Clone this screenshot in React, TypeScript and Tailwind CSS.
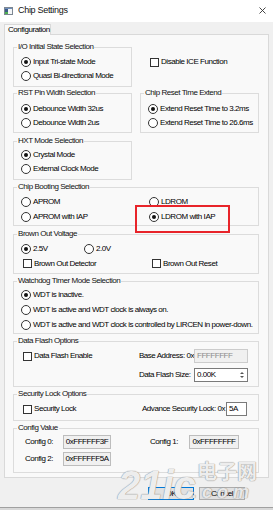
import React from 'react';

const PANEL_BG = 'bg-[#f9f9f9]';

interface ItemProps {
  label: string;
  checked?: boolean;
  className?: string;
}

const Radio: React.FC<ItemProps> = ({ label, checked, className = '' }) => (
  <div className={`flex items-center h-full ${className}`}>
    <span className="w-[10px] h-[10px] rounded-full border border-[#333] bg-white flex items-center justify-center shrink-0">
      {checked && <span className="w-[4px] h-[4px] rounded-full bg-[#111]" />}
    </span>
    <span className="ml-[2px] whitespace-nowrap">{label}</span>
  </div>
);

const Check: React.FC<ItemProps> = ({ label, checked, className = '' }) => (
  <div className={`flex items-center h-full ${className}`}>
    <span className="w-[9px] h-[9px] border border-[#333] bg-white shrink-0 flex items-center justify-center">
      {checked && <span className="w-[5px] h-[5px] bg-[#111]" />}
    </span>
    <span className="ml-[2px] whitespace-nowrap">{label}</span>
  </div>
);

interface GroupProps {
  title: string;
  className?: string;
  inner?: string;
  children?: React.ReactNode;
}

const Group: React.FC<GroupProps> = ({ title, className = '', inner = '', children }) => (
  <div className={`border border-[#dcdcdc] ${className}`}>
    <div className="h-0 leading-[8px]">
      <span className={`relative -top-[5px] ml-[3px] px-[1px] ${PANEL_BG} text-[#111] whitespace-nowrap`}>{title}</span>
    </div>
    <div className={inner}>{children}</div>
  </div>
);

const ValueBox: React.FC<{ value: string; w: string }> = ({ value, w }) => (
  <div className={`${w} h-[14px] border border-[#bdbdbd] bg-[#f0f0f0] flex items-center justify-center`}>{value}</div>
);

const App: React.FC = () => {
  return (
    <div className="relative w-[273px] h-[510px] bg-[#f0f0f0] flex flex-col overflow-hidden font-['Liberation_Sans',Arial,sans-serif] text-[8px] tracking-[-0.45px] text-black">
      {/* title bar */}
      <div className="h-[22px] bg-white flex items-center pl-[4px] pr-[7px] pb-[1px]">
        <svg width="9" height="8" viewBox="0 0 9 8">
          <rect x="0.5" y="0.5" width="8" height="7" fill="#f4f6f8" stroke="#7d8792" />
          <rect x="1" y="1" width="3" height="6" fill="#3c5a86" />
          <rect x="1" y="5" width="3" height="2" fill="#4caf50" />
          <rect x="1" y="1" width="7" height="1" fill="#6f8fbd" />
        </svg>
        <span className="ml-[5px] text-[9px] tracking-[-0.3px] text-[#111]">Chip Settings</span>
        <svg className="ml-auto" width="7" height="7" viewBox="0 0 7 7">
          <path d="M0.5 0.5 L6.5 6.5 M6.5 0.5 L0.5 6.5" stroke="#333" strokeWidth="0.9" />
        </svg>
      </div>

      {/* tab */}
      <div className="mt-[2px] pl-[4px] -mb-[1px] relative z-10">
        <div className={`w-[47px] h-[11px] border border-b-0 border-[#d9d9d9] ${PANEL_BG} flex items-center pl-[3px]`}>
          Configuration
        </div>
      </div>

      {/* panel */}
      <div className={`mx-[4px] h-[444px] border border-[#d9d9d9] ${PANEL_BG} pt-[12px] pl-[8px] pr-[9px] flex flex-col`}>
        <div className="flex gap-[8px]">
          <Group title="I/O Initial State Selection" className="w-[119px] h-[40px]" inner="pt-[7px] pl-[7px]">
            <div className="h-[14px]"><Radio checked label="Input Tri-state Mode" /></div>
            <div className="h-[14px]"><Radio label="Quasi Bi-directional Mode" /></div>
          </Group>
          <div className="pt-[8px] pl-[10px]">
            <div className="h-[14px]"><Check label="Disable ICE Function" /></div>
          </div>
        </div>

        <div className="mt-[6px] flex gap-[8px]">
          <Group title="RST Pin Width Selection" className="w-[119px] h-[40px]" inner="pt-[8px] pl-[7px]">
            <div className="h-[14px]"><Radio checked label="Debounce Width 32us" /></div>
            <div className="h-[14px]"><Radio label="Debounce Width 2us" /></div>
          </Group>
          <Group title="Chip Reset Time Extend" className="w-[119px] h-[40px]" inner="pt-[8px] pl-[7px]">
            <div className="h-[14px]"><Radio checked label="Extend Reset Time to 3.2ms" /></div>
            <div className="h-[14px]"><Radio label="Extend Reset Time to 26.6ms" /></div>
          </Group>
        </div>

        <Group title="HXT Mode Selection" className="mt-[8px] w-[119px] h-[39px]" inner="pt-[6px] pl-[7px]">
          <div className="h-[14px]"><Radio checked label="Crystal Mode" /></div>
          <div className="h-[14px]"><Radio label="External Clock Mode" /></div>
        </Group>

        <Group title="Chip Booting Selection" className="mt-[7px] h-[39px] relative" inner="pt-[6px] pl-[7px] grid grid-cols-[128px_1fr] auto-rows-[15px]">
          <Radio label="APROM" />
          <Radio label="LDROM" />
          <Radio label="APROM with IAP" />
          <Radio checked label="LDROM with IAP" />
          <div className="absolute left-[121px] top-[17px] w-[95px] h-[28px] border-2 border-[#e8242a] z-10" />
        </Group>

        <Group title="Brown Out Voltage" className="mt-[8px] h-[40px]" inner="pt-[6px] pl-[7px]">
          <div className="h-[15px] flex">
            <div className="w-[63px]"><Radio checked label="2.5V" /></div>
            <Radio label="2.0V" />
          </div>
          <div className="h-[15px] grid grid-cols-[128px_1fr]">
            <Check label="Brown Out Detector" className="ml-[2px]" />
            <Check label="Brown Out Reset" className="ml-[3px]" />
          </div>
        </Group>

        <Group title="Watchdog Timer Mode Selection" className="mt-[7px] h-[53px]" inner="pt-[5px] pl-[7px]">
          <div className="h-[15px]"><Radio checked label="WDT is inactive." /></div>
          <div className="h-[15px]"><Radio label="WDT is active and WDT clock is always on." /></div>
          <div className="h-[15px]"><Radio label="WDT is active and WDT clock is controlled by LIRCEN in power-down." /></div>
        </Group>

        <Group title="Data Flash Options" className="mt-[7px] h-[46px]" inner="pt-[7px] pl-[7px] pr-[9px]">
          <div className="h-[14px] flex">
            <div className="w-[118px]"><Check label="Data Flash Enable" className="ml-[2px]" /></div>
            <div className="w-[55px] flex items-center justify-end whitespace-nowrap">Base Address: 0x</div>
            <div className="w-[54px] h-[14px] border border-[#cccccc] bg-[#f0f0f0] text-[#8c8c8c] flex items-center pl-[2px]">FFFFFFFF</div>
          </div>
          <div className="mt-[5px] h-[14px] flex">
            <div className="w-[118px]" />
            <div className="w-[55px] flex items-center whitespace-nowrap">Data Flash Size:</div>
            <div className="w-[54px] h-[14px] border border-[#7a7a7a] bg-white flex items-center">
              <span className="pl-[2px]">0.00K</span>
              <div className="ml-auto w-[10px] h-full flex flex-col items-center justify-center gap-[2px]">
                <svg width="4" height="2" viewBox="0 0 4 2"><path d="M0 2 L2 0 L4 2 Z" fill="#555" /></svg>
                <svg width="4" height="2" viewBox="0 0 4 2"><path d="M0 0 L2 2 L4 0 Z" fill="#555" /></svg>
              </div>
            </div>
          </div>
        </Group>

        <Group title="Security Lock Options" className="mt-[7px] h-[27px]" inner="pt-[7px] pl-[7px] pr-[11px]">
          <div className="h-[14px] flex">
            <Check label="Security Lock" className="ml-[2px]" />
            <div className="ml-auto mr-[1px] flex items-center whitespace-nowrap">Advance Security Lock: 0x</div>
            <div className="w-[21px] h-[14px] border border-[#7a7a7a] bg-white flex items-center pl-[2px]">5A</div>
          </div>
        </Group>

        <Group title="Config Value" className="mt-[7px] h-[45px]" inner="pt-[6px] pl-[11px]">
          <div className="h-[14px] flex items-center">
            <div className="w-[38px]">Config 0:</div>
            <ValueBox value="0xFFFFFF3F" w="w-[48px]" />
            <div className="ml-[39px] w-[39px]">Config 1:</div>
            <ValueBox value="0xFFFFFFFF" w="w-[50px]" />
          </div>
          <div className="mt-[3px] h-[14px] flex items-center">
            <div className="w-[38px]">Config 2:</div>
            <ValueBox value="0xFFFFFF5A" w="w-[48px]" />
          </div>
        </Group>
      </div>

      {/* buttons */}
      <div className="mt-[9px] flex justify-end gap-[5px] pr-[28px]">
        <button className="w-[46px] h-[13px] border border-[#0078d7] bg-[#e1e1e1] flex items-center justify-center">OK</button>
        <button className="w-[46px] h-[13px] border border-[#adadad] bg-[#e1e1e1] flex items-center justify-center">Cancel</button>
      </div>

      <div className="mt-auto h-[3px] border-t border-[#a0a0a0] bg-[#d8d8d8]" />

      {/* watermark */}
      <div className="pointer-events-none absolute left-[118px] top-[465px] text-[40px] leading-[40px] font-bold italic tracking-[0px] text-white/85 [text-shadow:0_0_1px_#8a8a8a,0_0_1px_#8a8a8a]">
        21ic
      </div>
      <div className="pointer-events-none absolute left-[197px] top-[461px] text-[20px] leading-[20px] tracking-[0px] font-['Noto_Sans_CJK_SC',sans-serif] font-bold text-white/85 [text-shadow:0_0_1px_#8a8a8a,0_0_1px_#8a8a8a]">
        电子网
      </div>
      <div className="pointer-events-none absolute left-[192px] top-[483px] text-[18px] leading-[18px] tracking-[5px] font-bold italic text-white/80 [text-shadow:0_0_1px_#8a8a8a,0_0_1px_#8a8a8a]">
        .com
      </div>
    </div>
  );
};

export default App;
